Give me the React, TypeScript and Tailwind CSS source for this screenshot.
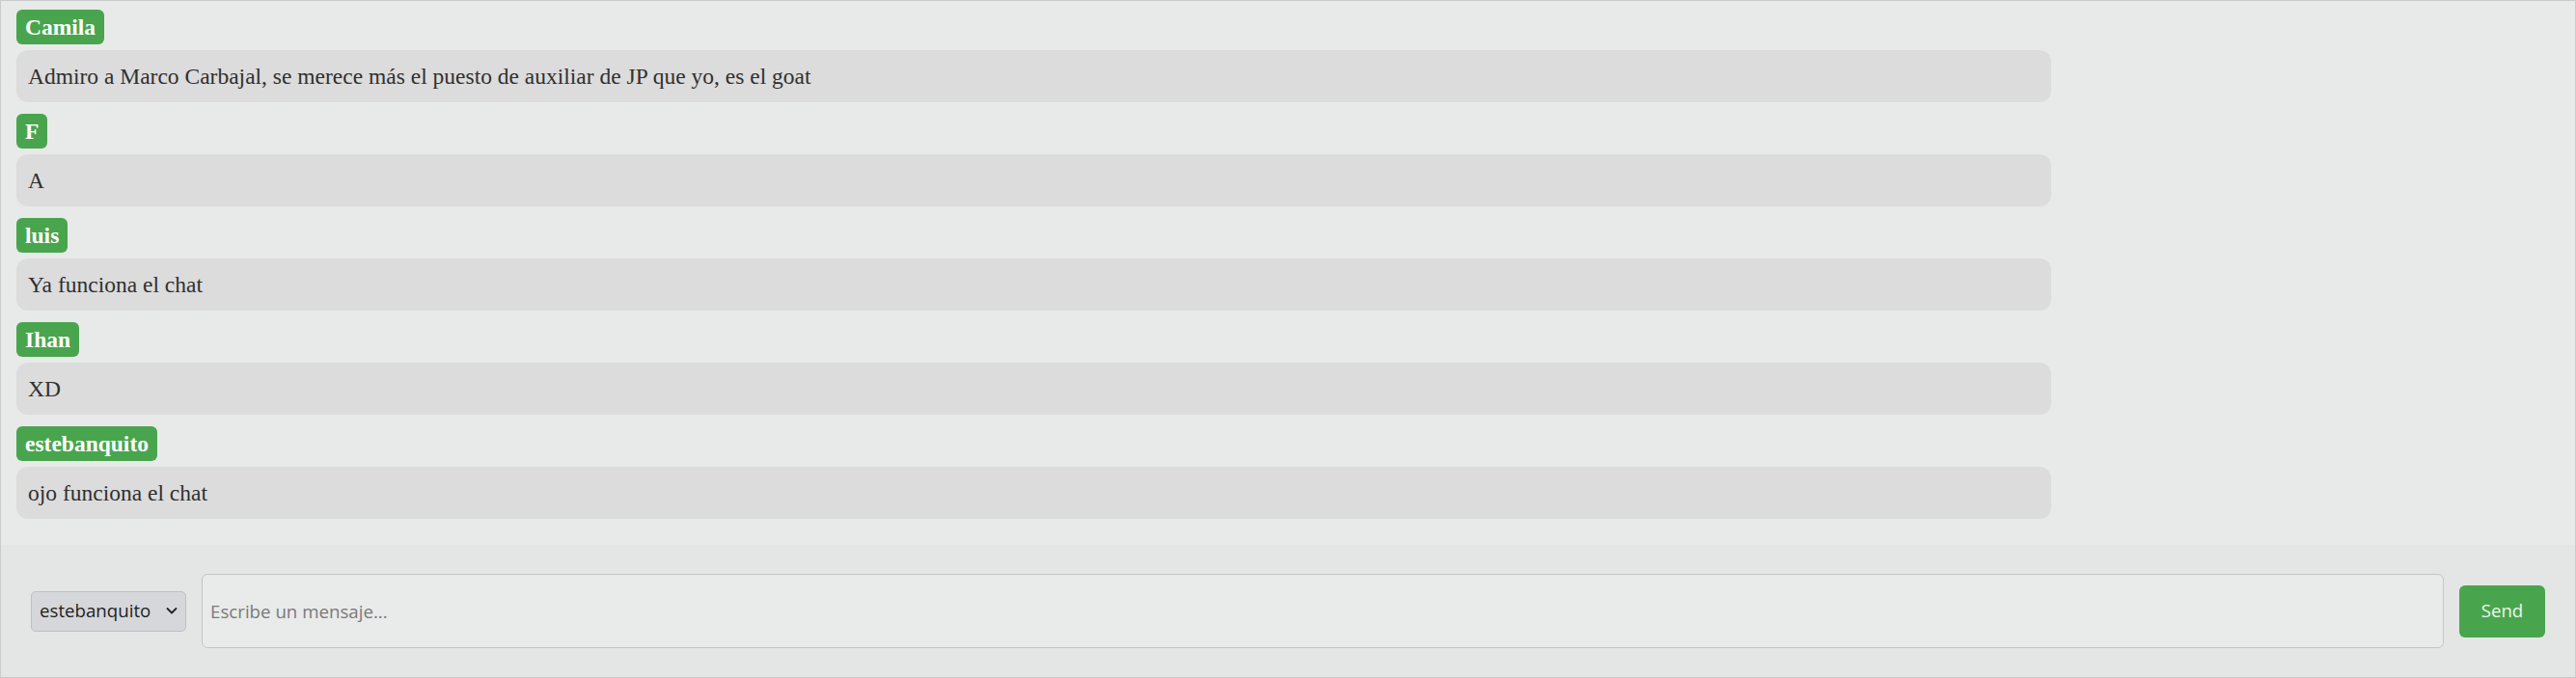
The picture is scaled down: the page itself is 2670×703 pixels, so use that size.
import { useState } from 'react'

const messages = [
  { user: 'Camila', text: 'Admiro a Marco Carbajal, se merece más el puesto de auxiliar de JP que yo, es el goat' },
  { user: 'F', text: 'A' },
  { user: 'luis', text: 'Ya funciona el chat' },
  { user: 'Ihan', text: 'XD' },
  { user: 'estebanquito', text: 'ojo funciona el chat' },
]

export default function App() {
  const [user, setUser] = useState('estebanquito')
  const [draft, setDraft] = useState('')

  return (
    <div className="w-full h-[703px] flex flex-col border border-[#c9caca] bg-[#e8e9e9] overflow-hidden">
      <div className="flex-1 flex flex-col items-start px-[16px] pt-[9px] font-['Liberation_Serif',serif]">
        {messages.map((m, i) => (
          <div key={i} className="w-full flex flex-col items-start">
            <span className="h-[36px] flex items-center px-[9px] rounded-[6px] bg-[#49a54d] text-white font-bold text-[23.5px] leading-[27px] mb-[6px]">
              {m.user}
            </span>
            <div className="w-[80%] py-[13px] px-[12px] rounded-[12px] bg-[#dcdcdc] text-[#303030] text-[23.5px] leading-[28px] mb-[12px]">
              {m.text}
            </div>
          </div>
        ))}
      </div>

      <div className="h-[137px] shrink-0 flex items-center gap-4 px-[31px] bg-[#e4e5e5] font-['Open_Sans',sans-serif]">
        <div className="relative w-[161px] h-[42px]">
          <select
            value={user}
            onChange={(e) => setUser(e.target.value)}
            className="appearance-none w-full h-full pl-[8px] pr-[28px] rounded-[5px] border border-[#bfc0c3] bg-[#d6d7da] text-[#1f1f1f] text-[18.7px] outline-none"
          >
            {messages.map((m) => (
              <option key={m.user} value={m.user}>{m.user}</option>
            ))}
          </select>
          <svg className="absolute left-[140px] top-[16px] w-[12px] h-[9px] pointer-events-none" viewBox="0 0 12 9" fill="none">
            <path d="M1.5 2 L6 6.5 L10.5 2" stroke="#222" strokeWidth="1.8" strokeLinecap="round" strokeLinejoin="round" />
          </svg>
        </div>
        <input
          type="text"
          value={draft}
          onChange={(e) => setDraft(e.target.value)}
          placeholder="Escribe un mensaje..."
          className="flex-1 h-[77px] px-[8px] rounded-[6px] border border-[#c4c5c5] bg-[#e9eaea] text-[18.7px] text-[#222] placeholder:text-[#7a7a7a] outline-none"
        />
        <button className="w-[89px] h-[54px] rounded-[6px] bg-[#49a54d] text-[#eef5ec] text-[18.7px]">
          Send
        </button>
      </div>
    </div>
  )
}
